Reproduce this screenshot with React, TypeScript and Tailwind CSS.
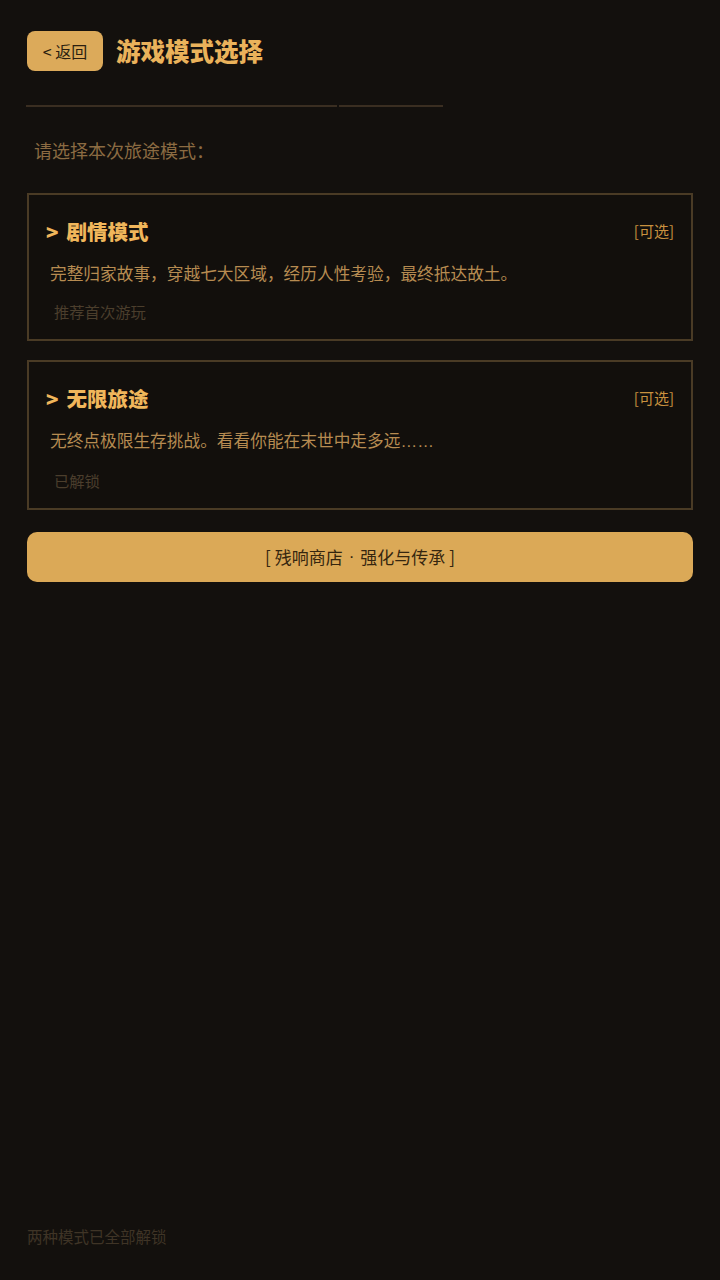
import React from "react";

const font = { fontFamily: '"Noto Sans CJK SC", "Noto Sans", sans-serif' };

function ModeCard({ title, desc, hint }: { title: string; desc: React.ReactNode; hint: string }) {
  return (
    <div className="border-2 border-[#4a3b25] bg-[#120f0c] pt-[21px] pb-[17px] pl-[17px] pr-[17px]">
      <div className="flex items-center justify-between h-[30px]">
        <div className="flex items-center text-[20.5px] font-extrabold text-[#f0b65b] leading-[30px]">
          <span>&gt;</span>
          <span className="ml-[8px]">{title}</span>
        </div>
        <div className="text-[15px] text-[#c8913f] leading-[20px]">[可选]</div>
      </div>
      <div className="mt-[15px] ml-[4px] text-[16.7px] text-[#b68b51] leading-[24px]">{desc}</div>
      <div className="mt-[15px] ml-[8px] text-[15.3px] text-[#4b3e2c] leading-[22px]">{hint}</div>
    </div>
  );
}

export default function App() {
  return (
    <div style={font} className="min-h-[1280px] w-full bg-[#13100d] flex flex-col px-[27px]">
      <div className="flex items-center pt-[31px]">
        <button className="w-[76px] h-[40px] rounded-[8px] bg-[#dcaa5a] text-[#2a1e10] text-[16px] flex items-center justify-center">
          &lt; 返回
        </button>
        <div className="ml-[13px] text-[24.5px] font-extrabold text-[#eab25b] leading-[32px]">游戏模式选择</div>
      </div>
      <div className="mt-[34px] flex w-[417px] ml-[-1px] gap-[2px]">
        <div className="h-[2px] w-[311px] bg-[#3a2e21]" />
        <div className="h-[2px] flex-1 bg-[#3a2e21]" />
      </div>
      <div className="mt-[31px] pl-[7px] text-[18px] text-[#8b6b42] leading-[24px]">请选择本次旅途模式：</div>
      <div className="mt-[31px] flex flex-col gap-[19px]">
        <ModeCard title="剧情模式" desc="完整归家故事，穿越七大区域，经历人性考验，最终抵达故土。" hint="推荐首次游玩" />
        <ModeCard
          title="无限旅途"
          desc={
            <>
              无终点极限生存挑战。看看你能在末世中走多远
              <span style={{ fontFamily: '"Liberation Sans", sans-serif' }}>……</span>
            </>
          }
          hint="已解锁"
        />
      </div>
      <button className="mt-[22px] h-[50px] w-full rounded-[10px] bg-[#dba957] text-[#35260f] text-[17px] flex items-center justify-center">
        [ 残响商店 <span className="mx-[6px]" style={{ fontFamily: '"Liberation Sans", sans-serif' }}>·</span> 强化与传承 ]
      </button>
      <div className="mt-auto pb-[33px] text-[15.5px] text-[#3f3426] leading-[22px]">两种模式已全部解锁</div>
    </div>
  );
}
